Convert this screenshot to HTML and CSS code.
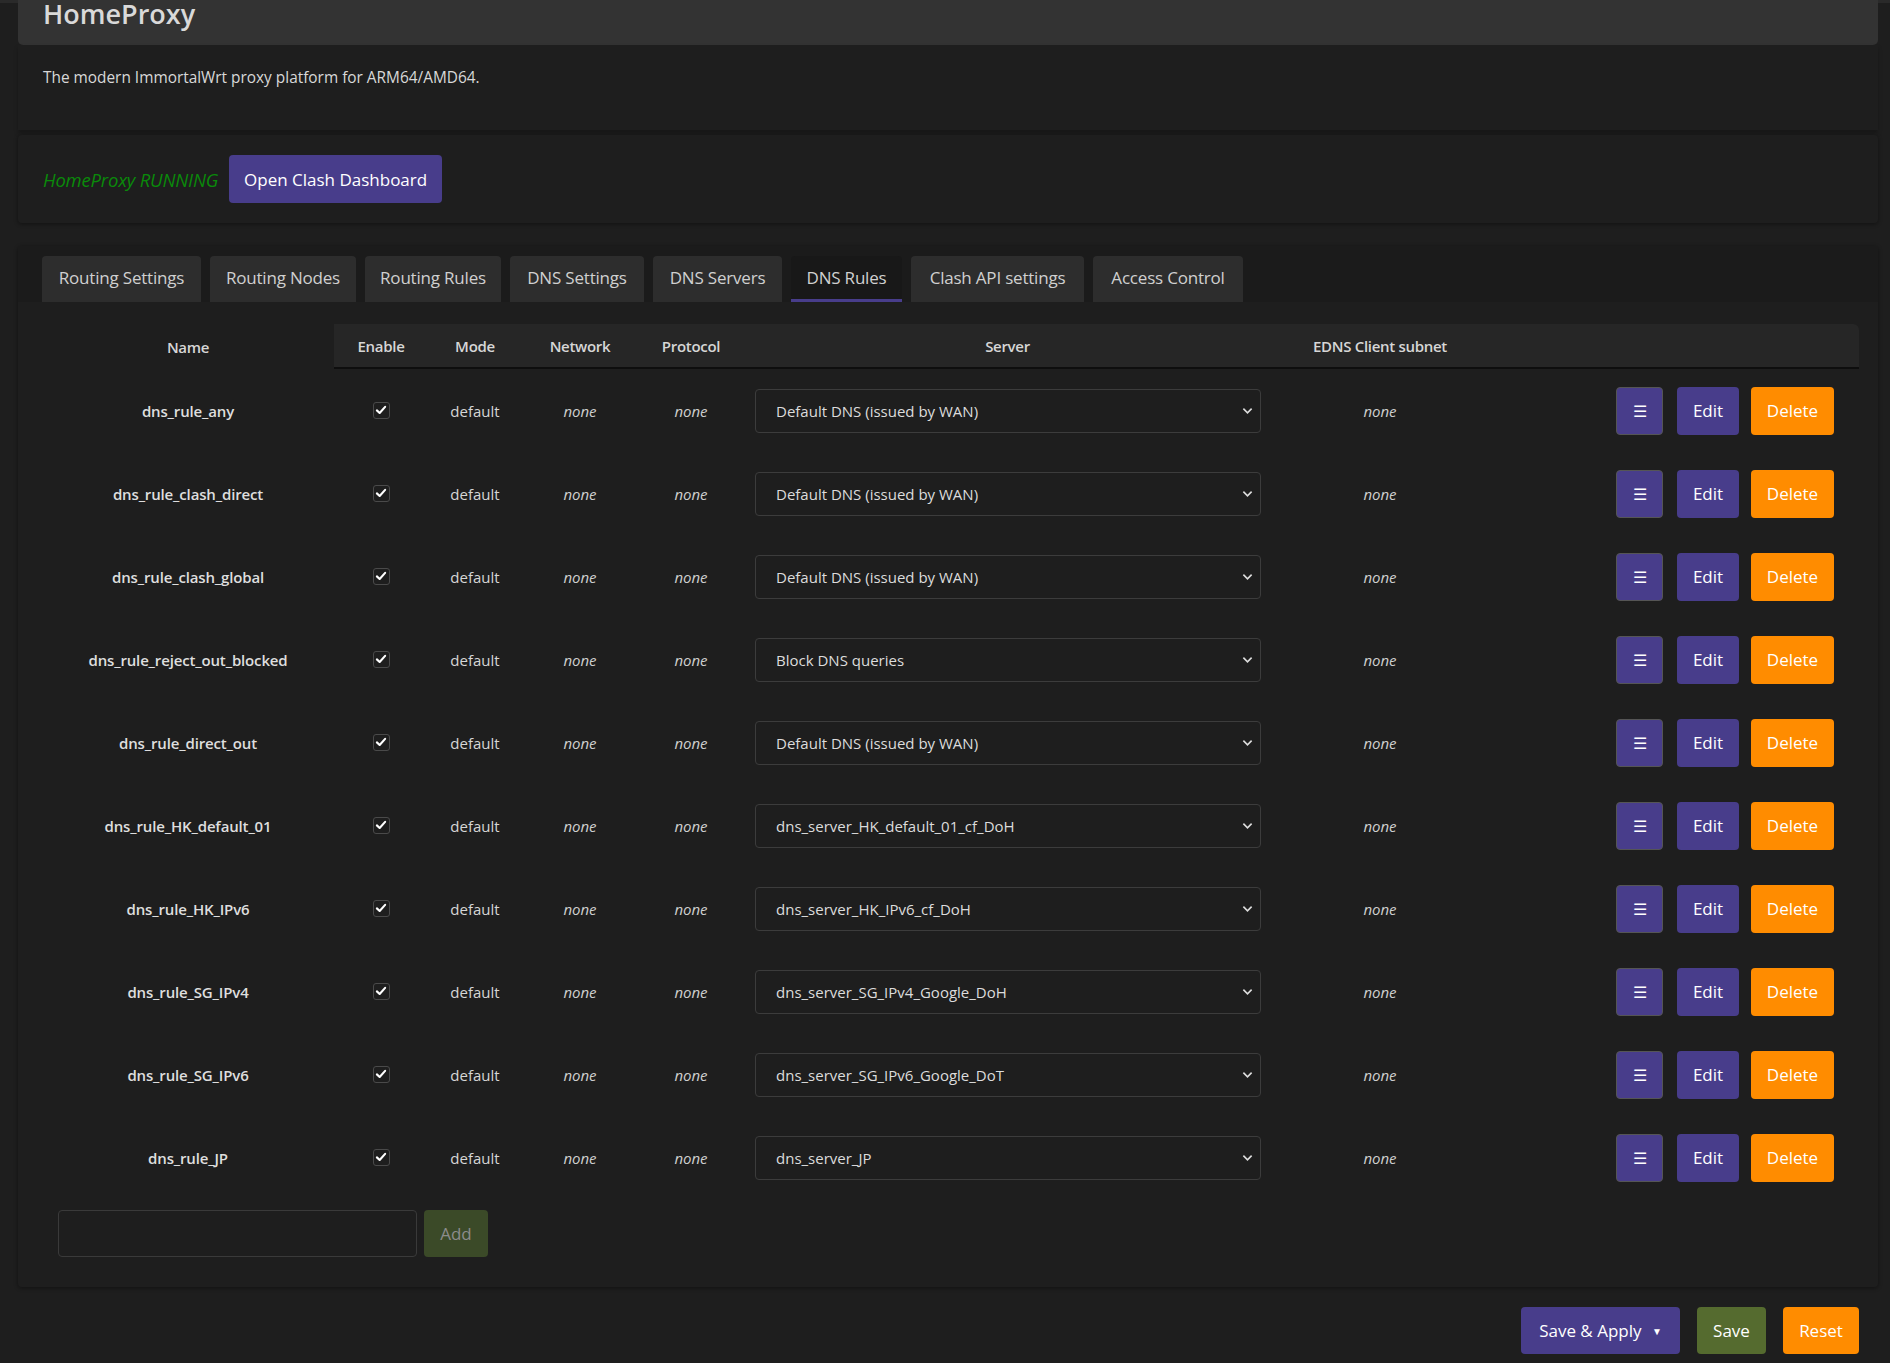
FILE: index.html
```html
<!DOCTYPE html>
<html>
<head>
<meta charset="utf-8">
<title>HomeProxy - DNS Rules</title>
<link rel="stylesheet" href="styles.css">
</head>
<body>
<div class="topline"></div>
<div class="main">
  <div class="title-box"><h2 class="title">HomeProxy</h2></div>
  <div class="desc-box"><p class="desc">The modern ImmortalWrt proxy platform for ARM64/AMD64.</p></div>

  <div class="section status">
    <span class="running">HomeProxy RUNNING</span>
    <button class="btn purple dash">Open Clash Dashboard</button>
  </div>

  <div class="section rules">
    <div class="tabs">
      <span class="tab">Routing Settings</span>
      <span class="tab">Routing Nodes</span>
      <span class="tab">Routing Rules</span>
      <span class="tab">DNS Settings</span>
      <span class="tab">DNS Servers</span>
      <span class="tab active">DNS Rules</span>
      <span class="tab">Clash API settings</span>
      <span class="tab">Access Control</span>
    </div>

    <table class="tbl">
      <colgroup>
        <col class="c-name"><col class="c-en"><col class="c-mode"><col class="c-net"><col class="c-proto"><col class="c-srv"><col class="c-edns"><col class="c-act">
      </colgroup>
      <thead>
        <tr>
          <th class="th-name">Name</th>
          <th class="th-first">Enable</th>
          <th>Mode</th>
          <th>Network</th>
          <th>Protocol</th>
          <th>Server</th>
          <th>EDNS Client subnet</th>
          <th class="th-last"></th>
        </tr>
      </thead>
      <tbody id="rows"></tbody>
    </table>

    <div class="add-row">
      <input class="add-input" type="text">
      <button class="btn add">Add</button>
    </div>
  </div>

  <div class="footer">
    <button class="btn purple apply">Save &amp; Apply <span class="caret">▼</span></button>
    <button class="btn green">Save</button>
    <button class="btn orange">Reset</button>
  </div>
</div>
<script src="app.js"></script>
</body>
</html>
```

FILE: app.js
```js
var data = [
  ["dns_rule_any", "Default DNS (issued by WAN)"],
  ["dns_rule_clash_direct", "Default DNS (issued by WAN)"],
  ["dns_rule_clash_global", "Default DNS (issued by WAN)"],
  ["dns_rule_reject_out_blocked", "Block DNS queries"],
  ["dns_rule_direct_out", "Default DNS (issued by WAN)"],
  ["dns_rule_HK_default_01", "dns_server_HK_default_01_cf_DoH"],
  ["dns_rule_HK_IPv6", "dns_server_HK_IPv6_cf_DoH"],
  ["dns_rule_SG_IPv4", "dns_server_SG_IPv4_Google_DoH"],
  ["dns_rule_SG_IPv6", "dns_server_SG_IPv6_Google_DoT"],
  ["dns_rule_JP", "dns_server_JP"]
];
var check = '<span class="cb"><svg viewBox="0 0 16 16" width="12" height="12"><path d="M2.5 8.5 L6.2 12 L13.5 3.8" fill="none" stroke="#fff" stroke-width="2.8" stroke-linecap="round" stroke-linejoin="round"/></svg></span>';
var chev = '<svg class="chev" viewBox="0 0 12 8" width="11" height="8"><path d="M1.5 1.5 L6 6 L10.5 1.5" fill="none" stroke="#ddd" stroke-width="1.8"/></svg>';
var html = "";
data.forEach(function (d) {
  html += '<tr>' +
    '<td class="name">' + d[0] + '</td>' +
    '<td>' + check + '</td>' +
    '<td>default</td>' +
    '<td class="none">none</td>' +
    '<td class="none">none</td>' +
    '<td><div class="sel"><span>' + d[1] + '</span>' + chev + '</div></td>' +
    '<td class="none">none</td>' +
    '<td class="acts"><button class="btn purple menu">☰</button><button class="btn purple edit">Edit</button><button class="btn orange del">Delete</button></td>' +
    '</tr>';
});
document.getElementById("rows").innerHTML = html;
```

FILE: styles.css
```css
* { box-sizing: border-box; }
html, body { margin: 0; padding: 0; }
body {
  background: #1e1e1e;
  color: #d4d4d4;
  font-family: "Open Sans", Lato, sans-serif;
  width: 1890px;
  height: 1363px;
  overflow: hidden;
}
.topline { height: 3px; background: #2a2a2a; }
.main { padding: 0 12px 0 18px; }
.title-box {
  background: #333333;
  height: 45px;
  margin-top: -3px;
  border-radius: 0 0 5px 5px;
  padding-left: 25px;
}
.title {
  margin: 0;
  font-size: 27px;
  line-height: 27px;
  font-weight: 600;
  color: #d9d9d9;
}
.desc-box {
  height: 85px;
  padding: 22px 25px 0;
  box-shadow: 0 3px 4px rgba(0,0,0,0.25);
}
.desc { margin: 0; font-size: 15.4px; color: #d8d8d8; }
.section {
  background: #1e1e1e;
  box-shadow: 0 1px 4px rgba(0,0,0,0.45);
  border-radius: 4px;
}
.status {
  margin-top: 5px;
  height: 88px;
  padding: 0 25px;
  display: flex;
  align-items: center;
  gap: 11px;
}
.running { color: #0a8a0a; font-style: italic; font-size: 18.5px; letter-spacing: -0.2px; }
.btn {
  font-family: inherit;
  border: none;
  border-radius: 4px;
  color: #fff;
  font-size: 17px;
  height: 48px;
  padding: 0;
  cursor: pointer;
}
.purple { background: #483d8b; }
.orange { background: #ff8c00; }
.green { background: #556b2f; }
.dash { width: 213px; margin-top: 0; }
.rules { margin-top: 23px; padding: 0 19px 30px 24px; }
.tabs {
  display: flex;
  gap: 9px;
  background: #1b1b1b;
  margin: 0 -19px 0 -24px;
  padding: 10px 19px 0 24px;
}
.tab {
  height: 46px;
  line-height: 44px;
  padding: 0;
  text-align: center;
  background: #2d2d2d;
  border-radius: 4px 4px 0 0;
  font-size: 17px;
  color: #d0d0d0;
  white-space: nowrap;
  letter-spacing: -0.2px;
}
.tab:nth-child(1) { width: 159px; }
.tab:nth-child(2) { width: 146px; }
.tab:nth-child(3) { width: 136px; }
.tab:nth-child(4) { width: 134px; }
.tab:nth-child(5) { width: 129px; }
.tab:nth-child(6) { width: 111px; }
.tab:nth-child(7) { width: 173px; }
.tab:nth-child(8) { width: 150px; }
.tab.active { background: #181818; border-bottom: 3px solid #483d8b; }
.tbl {
  margin-top: 22px;
  width: 100%;
  border-collapse: separate;
  border-spacing: 0;
  table-layout: fixed;
}
.c-name { width: 292px; }
.c-en { width: 94px; }
.c-mode { width: 94px; }
.c-net { width: 116px; }
.c-proto { width: 106px; }
.c-srv { width: 527px; }
.c-edns { width: 218px; }
.tbl th {
  height: 45px;
  background: #262626;
  font-size: 15px;
  font-weight: 600;
  color: #d6d6d6;
  text-align: center;
  border-bottom: 2px solid #0e0e0e;
  padding: 0;
  letter-spacing: -0.3px;
}
.tbl th.th-name { background: transparent; border-bottom: none; }
.tbl th.th-last { border-top-right-radius: 6px; }
.tbl td {
  height: 83px;
  text-align: center;
  font-size: 15px;
  padding: 0;
  color: #d6d6d6;
}
.tbl td.name { font-weight: 600; color: #dedede; letter-spacing: -0.15px; }
.tbl td.none { font-style: italic; color: #cfcfcf; }
.cb {
  display: inline-flex;
  align-items: center;
  justify-content: center;
  width: 17px;
  height: 17px;
  border: 1px solid #4a4a4a;
  border-radius: 3px;
  vertical-align: middle;
  position: relative;
  top: -2px;
}
.sel {
  margin: 0 10px 0 11px;
  height: 44px;
  border: 1px solid #3c3c3c;
  border-radius: 4px;
  display: flex;
  align-items: center;
  justify-content: space-between;
  padding: 0 7px 0 20px;
  text-align: left;
  font-size: 15px;
  color: #dcdcdc;
}
.acts { text-align: right !important; padding-right: 25px !important; }
.acts .btn { vertical-align: middle; margin-left: 12px; }
.menu { width: 47px; border: 1px solid #555 !important; font-size: 16px; margin-left: 0 !important; }
.edit { width: 62px; margin-left: 14px !important; }
.del { width: 83px; }
.add-row { display: flex; gap: 7px; margin-top: 11px; padding-left: 16px; }
.add-input {
  width: 359px;
  height: 47px;
  background: #1e1e1e;
  border: 1px solid #3a3a3a;
  border-radius: 4px;
}
.add { width: 64px; height: 47px; background: #3b4a28; color: #8c8c8c; }
.footer {
  display: flex;
  justify-content: flex-end;
  gap: 17px;
  padding: 20px 19px 0 0;
}
.footer .btn { height: 47px; }
.apply { width: 159px; }
.caret { font-size: 10px; margin-left: 6px; position: relative; top: -2px; }
.green { width: 69px; }
.footer .orange { width: 76px; }
```
